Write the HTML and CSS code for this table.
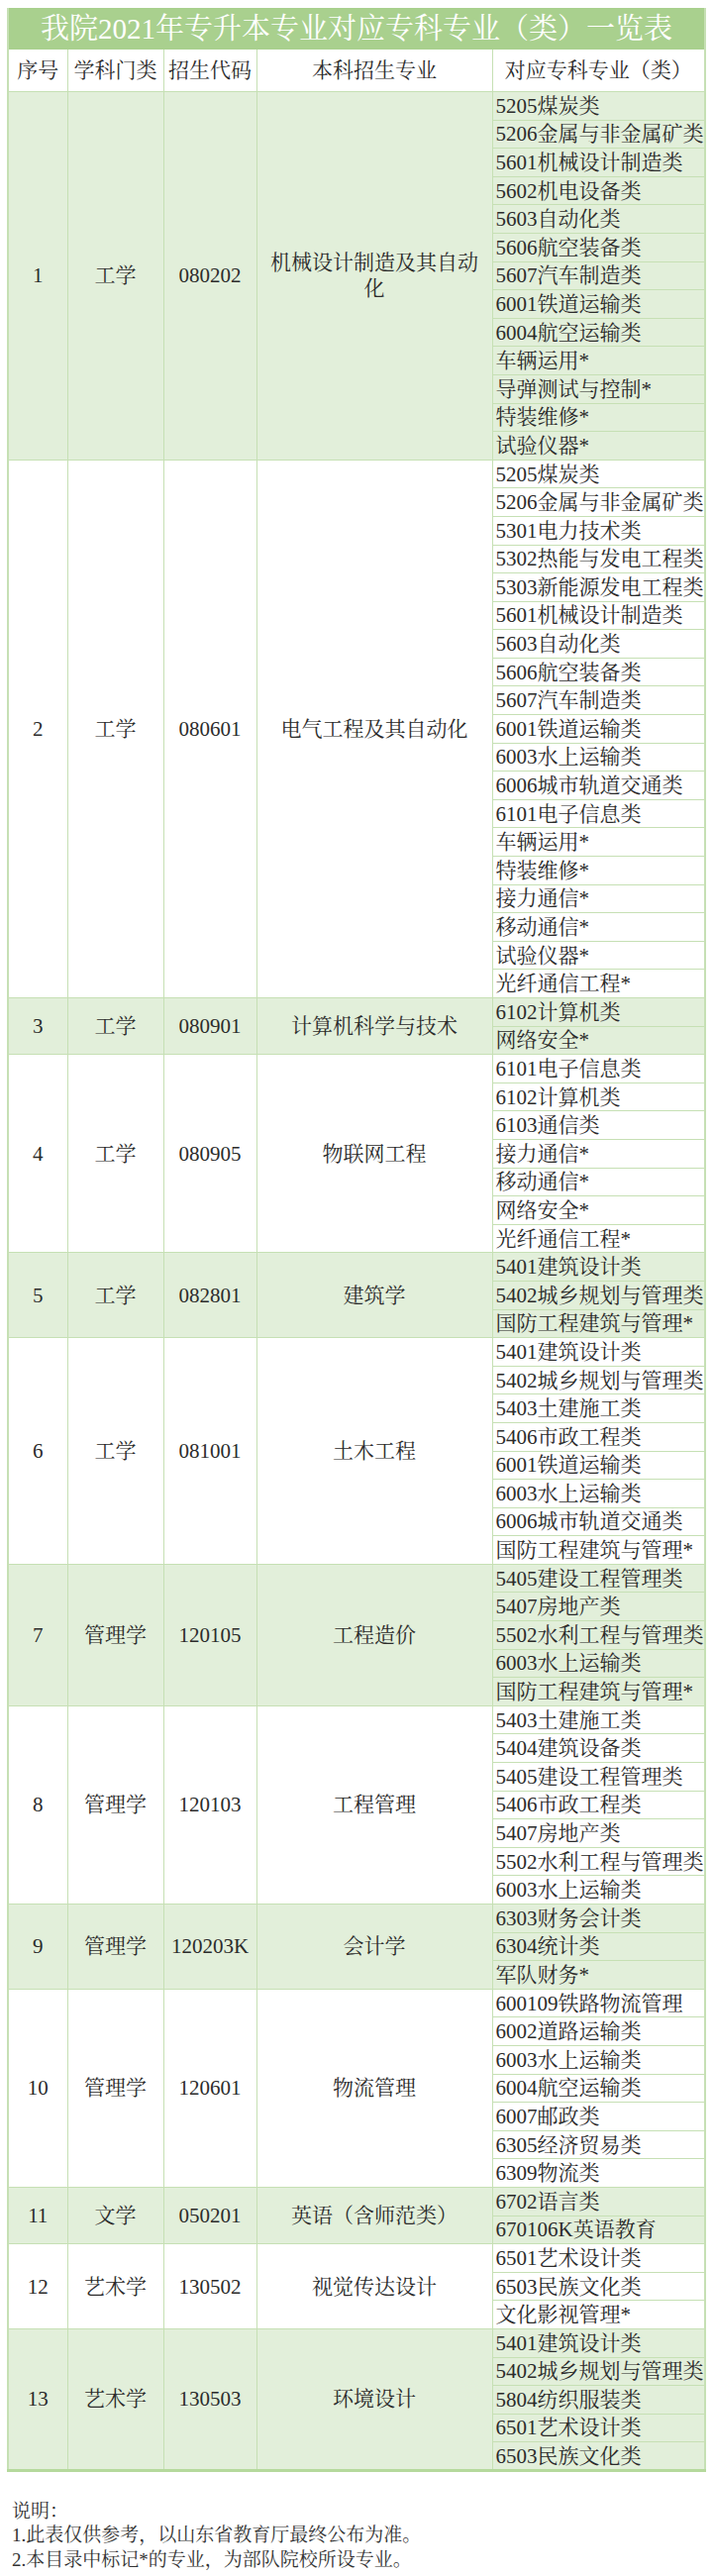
FILE: index.html
```html
<!DOCTYPE html>
<html lang="zh-CN">
<head>
<meta charset="utf-8">
<title>我院2021年专升本专业对应专科专业（类）一览表</title>
<link rel="stylesheet" href="styles.css">
</head>
<body>
<div class="page">
<table class="grid">
<colgroup>
<col class="c-no"><col class="c-cat"><col class="c-code"><col class="c-major"><col class="c-sub">
</colgroup>
<thead>
<tr class="title-row"><th colspan="5">我院2021年专升本专业对应专科专业（类）一览表</th></tr>
<tr class="head-row"><th>序号</th><th>学科门类</th><th>招生代码</th><th>本科招生专业</th><th>对应专科专业（类）</th></tr>
</thead>
<tbody class="g">
<tr><td rowspan="13" class="m">1</td><td rowspan="13" class="m">工学</td><td rowspan="13" class="m">080202</td><td rowspan="13" class="m major">机械设计制造及其自动化</td><td class="s">5205煤炭类</td></tr>
<tr><td class="s">5206金属与非金属矿类</td></tr>
<tr><td class="s">5601机械设计制造类</td></tr>
<tr><td class="s">5602机电设备类</td></tr>
<tr><td class="s">5603自动化类</td></tr>
<tr><td class="s">5606航空装备类</td></tr>
<tr><td class="s">5607汽车制造类</td></tr>
<tr><td class="s">6001铁道运输类</td></tr>
<tr><td class="s">6004航空运输类</td></tr>
<tr><td class="s">车辆运用*</td></tr>
<tr><td class="s">导弹测试与控制*</td></tr>
<tr><td class="s">特装维修*</td></tr>
<tr><td class="s">试验仪器*</td></tr>
</tbody>
<tbody class="w">
<tr><td rowspan="19" class="m">2</td><td rowspan="19" class="m">工学</td><td rowspan="19" class="m">080601</td><td rowspan="19" class="m major">电气工程及其自动化</td><td class="s">5205煤炭类</td></tr>
<tr><td class="s">5206金属与非金属矿类</td></tr>
<tr><td class="s">5301电力技术类</td></tr>
<tr><td class="s">5302热能与发电工程类</td></tr>
<tr><td class="s">5303新能源发电工程类</td></tr>
<tr><td class="s">5601机械设计制造类</td></tr>
<tr><td class="s">5603自动化类</td></tr>
<tr><td class="s">5606航空装备类</td></tr>
<tr><td class="s">5607汽车制造类</td></tr>
<tr><td class="s">6001铁道运输类</td></tr>
<tr><td class="s">6003水上运输类</td></tr>
<tr><td class="s">6006城市轨道交通类</td></tr>
<tr><td class="s">6101电子信息类</td></tr>
<tr><td class="s">车辆运用*</td></tr>
<tr><td class="s">特装维修*</td></tr>
<tr><td class="s">接力通信*</td></tr>
<tr><td class="s">移动通信*</td></tr>
<tr><td class="s">试验仪器*</td></tr>
<tr><td class="s">光纤通信工程*</td></tr>
</tbody>
<tbody class="g">
<tr><td rowspan="2" class="m">3</td><td rowspan="2" class="m">工学</td><td rowspan="2" class="m">080901</td><td rowspan="2" class="m major">计算机科学与技术</td><td class="s">6102计算机类</td></tr>
<tr><td class="s">网络安全*</td></tr>
</tbody>
<tbody class="w">
<tr><td rowspan="7" class="m">4</td><td rowspan="7" class="m">工学</td><td rowspan="7" class="m">080905</td><td rowspan="7" class="m major">物联网工程</td><td class="s">6101电子信息类</td></tr>
<tr><td class="s">6102计算机类</td></tr>
<tr><td class="s">6103通信类</td></tr>
<tr><td class="s">接力通信*</td></tr>
<tr><td class="s">移动通信*</td></tr>
<tr><td class="s">网络安全*</td></tr>
<tr><td class="s">光纤通信工程*</td></tr>
</tbody>
<tbody class="g">
<tr><td rowspan="3" class="m">5</td><td rowspan="3" class="m">工学</td><td rowspan="3" class="m">082801</td><td rowspan="3" class="m major">建筑学</td><td class="s">5401建筑设计类</td></tr>
<tr><td class="s">5402城乡规划与管理类</td></tr>
<tr><td class="s">国防工程建筑与管理*</td></tr>
</tbody>
<tbody class="w">
<tr><td rowspan="8" class="m">6</td><td rowspan="8" class="m">工学</td><td rowspan="8" class="m">081001</td><td rowspan="8" class="m major">土木工程</td><td class="s">5401建筑设计类</td></tr>
<tr><td class="s">5402城乡规划与管理类</td></tr>
<tr><td class="s">5403土建施工类</td></tr>
<tr><td class="s">5406市政工程类</td></tr>
<tr><td class="s">6001铁道运输类</td></tr>
<tr><td class="s">6003水上运输类</td></tr>
<tr><td class="s">6006城市轨道交通类</td></tr>
<tr><td class="s">国防工程建筑与管理*</td></tr>
</tbody>
<tbody class="g">
<tr><td rowspan="5" class="m">7</td><td rowspan="5" class="m">管理学</td><td rowspan="5" class="m">120105</td><td rowspan="5" class="m major">工程造价</td><td class="s">5405建设工程管理类</td></tr>
<tr><td class="s">5407房地产类</td></tr>
<tr><td class="s">5502水利工程与管理类</td></tr>
<tr><td class="s">6003水上运输类</td></tr>
<tr><td class="s">国防工程建筑与管理*</td></tr>
</tbody>
<tbody class="w">
<tr><td rowspan="7" class="m">8</td><td rowspan="7" class="m">管理学</td><td rowspan="7" class="m">120103</td><td rowspan="7" class="m major">工程管理</td><td class="s">5403土建施工类</td></tr>
<tr><td class="s">5404建筑设备类</td></tr>
<tr><td class="s">5405建设工程管理类</td></tr>
<tr><td class="s">5406市政工程类</td></tr>
<tr><td class="s">5407房地产类</td></tr>
<tr><td class="s">5502水利工程与管理类</td></tr>
<tr><td class="s">6003水上运输类</td></tr>
</tbody>
<tbody class="g">
<tr><td rowspan="3" class="m">9</td><td rowspan="3" class="m">管理学</td><td rowspan="3" class="m">120203K</td><td rowspan="3" class="m major">会计学</td><td class="s">6303财务会计类</td></tr>
<tr><td class="s">6304统计类</td></tr>
<tr><td class="s">军队财务*</td></tr>
</tbody>
<tbody class="w">
<tr><td rowspan="7" class="m">10</td><td rowspan="7" class="m">管理学</td><td rowspan="7" class="m">120601</td><td rowspan="7" class="m major">物流管理</td><td class="s">600109铁路物流管理</td></tr>
<tr><td class="s">6002道路运输类</td></tr>
<tr><td class="s">6003水上运输类</td></tr>
<tr><td class="s">6004航空运输类</td></tr>
<tr><td class="s">6007邮政类</td></tr>
<tr><td class="s">6305经济贸易类</td></tr>
<tr><td class="s">6309物流类</td></tr>
</tbody>
<tbody class="g">
<tr><td rowspan="2" class="m">11</td><td rowspan="2" class="m">文学</td><td rowspan="2" class="m">050201</td><td rowspan="2" class="m major">英语（含师范类）</td><td class="s">6702语言类</td></tr>
<tr><td class="s">670106K英语教育</td></tr>
</tbody>
<tbody class="w">
<tr><td rowspan="3" class="m">12</td><td rowspan="3" class="m">艺术学</td><td rowspan="3" class="m">130502</td><td rowspan="3" class="m major">视觉传达设计</td><td class="s">6501艺术设计类</td></tr>
<tr><td class="s">6503民族文化类</td></tr>
<tr><td class="s">文化影视管理*</td></tr>
</tbody>
<tbody class="g last">
<tr><td rowspan="5" class="m">13</td><td rowspan="5" class="m">艺术学</td><td rowspan="5" class="m">130503</td><td rowspan="5" class="m major">环境设计</td><td class="s">5401建筑设计类</td></tr>
<tr><td class="s">5402城乡规划与管理类</td></tr>
<tr><td class="s">5804纺织服装类</td></tr>
<tr><td class="s">6501艺术设计类</td></tr>
<tr><td class="s">6503民族文化类</td></tr>
</tbody>
</table>
<div class="notes">
<p>说明：</p>
<p>1.此表仅供参考，以山东省教育厅最终公布为准。</p>
<p>2.本目录中标记*的专业，为部队院校所设专业。</p>
</div>
</div>
</body>
</html>
```

FILE: styles.css
```css
html, body {
  margin: 0;
  padding: 0;
  background: #ffffff;
}

.page {
  padding: 8px 0 0 7px;
  font-family: "Liberation Serif", "Noto Serif CJK SC", "Noto Sans CJK SC", serif;
  color: #2b2b2b;
}

.grid {
  width: 704px;
  border-collapse: collapse;
  table-layout: fixed;
  border-bottom: 3px solid #b5d99c;
  border-left: 2px solid #c6e0b4;
  border-right: 2px solid #c6e0b4;
}

.c-no { width: 60px; }
.c-cat { width: 97px; }
.c-code { width: 94px; }
.c-major { width: 238px; }
.c-sub { width: 215px; }

.title-row {
  height: 41px;
}

.title-row th {
  padding: 0;
  background: #a9d08e;
  color: #ffffff;
  font-weight: normal;
  font-size: 29px;
  text-align: center;
  border: 1px solid #a9d08e;
  line-height: 1;
}

.head-row {
  height: 43px;
}

.head-row th {
  padding: 0;
  background: #ffffff;
  font-weight: normal;
  font-size: 21px;
  text-align: center;
  border: 1px solid #c6e0b4;
  line-height: 1;
}

tbody tr {
  height: 28.6px;
}

td {
  border: 1px solid #c6e0b4;
  font-size: 21px;
  line-height: 20px;
  padding: 0;
}

td.m {
  text-align: center;
  vertical-align: middle;
  padding: 0 5px;
}

td.major {
  line-height: 26px;
}

td.s {
  text-align: left;
  padding: 0 0 0 3px;
  white-space: nowrap;
}

tbody.g td {
  background: #e2efda;
}

tbody.w td {
  background: #ffffff;
}

.notes {
  padding: 28px 0 0 5px;
  font-size: 19px;
  line-height: 24.5px;
  color: #333333;
}

.notes p {
  margin: 0;
}
```
